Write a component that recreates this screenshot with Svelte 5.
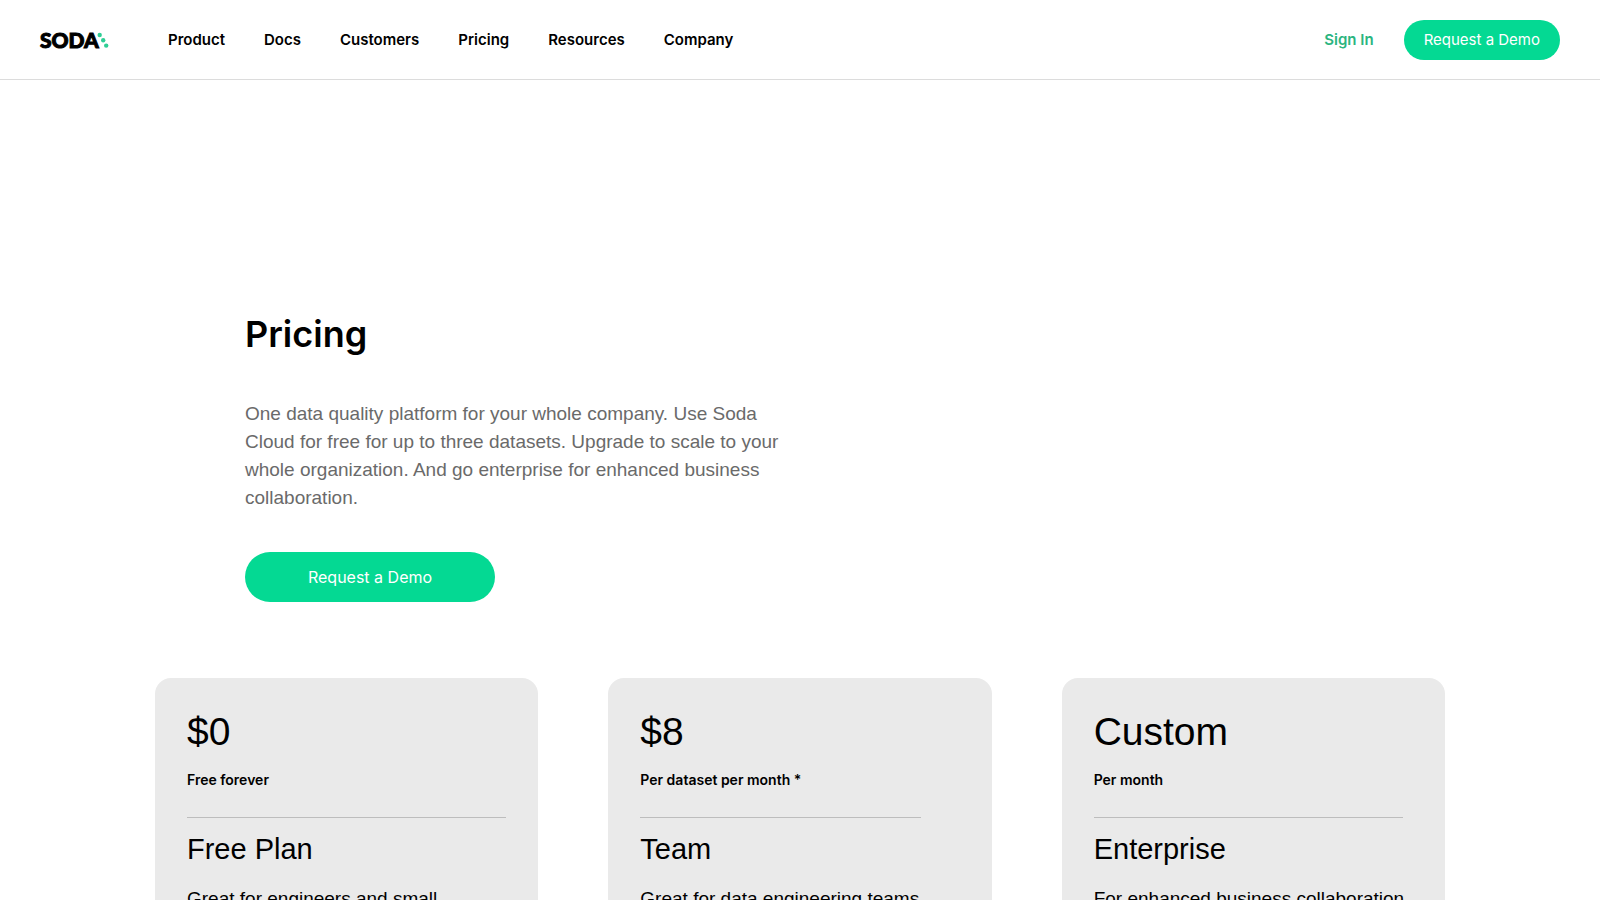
<script>
	const links = ['Product', 'Docs', 'Customers', 'Pricing', 'Resources', 'Company'];

	const plans = [
		{
			price: '$0',
			term: 'Free forever',
			name: 'Free Plan',
			text: 'Great for engineers and small',
			rule: 100
		},
		{
			price: '$8',
			term: 'Per dataset per month *',
			name: 'Team',
			text: 'Great for data engineering teams',
			rule: 88
		},
		{
			price: 'Custom',
			term: 'Per month',
			name: 'Enterprise',
			text: 'For enhanced business collaboration',
			rule: 97
		}
	];
</script>

<header class="topbar">
	<a class="logo" href="/" aria-label="Soda">
		<svg width="68" height="20" viewBox="0 0 68 20">
			<text class="wordmark" x="0" y="18">SODA</text>
			<circle class="dot" cx="59.7" cy="5" r="2.2" />
			<circle class="dot" cx="63.2" cy="10.3" r="2.2" />
			<circle class="dot" cx="66.2" cy="15.6" r="2.2" />
		</svg>
	</a>
	<nav class="menu">
		{#each links as link}
			<a href="/{link.toLowerCase()}">{link}</a>
		{/each}
	</nav>
	<div class="actions">
		<a class="sign-in" href="/sign-in">Sign In</a>
		<button class="demo">Request a Demo</button>
	</div>
</header>

<main>
	<section class="hero">
		<h1>Pricing</h1>
		<p>
			One data quality platform for your whole company. Use Soda Cloud for free for up to three
			datasets. Upgrade to scale to your whole organization. And go enterprise for enhanced business
			collaboration.
		</p>
		<button class="demo large">Request a Demo</button>
	</section>

	<section class="plans">
		{#each plans as plan}
			<article class="plan">
				<div class="price">{plan.price}</div>
				<div class="term">{plan.term}</div>
				<hr style="width: {plan.rule}%" />
				<h2>{plan.name}</h2>
				<p>{plan.text}</p>
			</article>
		{/each}
	</section>
</main>

<style>
	:global(body) {
		margin: 0;
		background: #fff;
		color: #000;
		font-family: 'Liberation Sans', Arial, sans-serif;
	}

	a {
		color: inherit;
		text-decoration: none;
	}

	.topbar {
		display: flex;
		align-items: center;
		height: 79px;
		padding: 0 40px;
		border-bottom: 1px solid #dcdcdc;
	}

	.logo {
		display: flex;
		margin-right: 60px;
	}

	.logo svg {
		overflow: visible;
	}

	.wordmark {
		font-family: Lato, sans-serif;
		font-size: 21px;
		font-weight: 900;
		stroke: #000;
		stroke-width: 1px;
	}

	.dot {
		fill: #2fce95;
	}

	.menu {
		display: flex;
		gap: 39px;
		font-family: Inter, sans-serif;
		font-size: 15px;
		font-weight: 600;
	}

	.actions {
		display: flex;
		align-items: center;
		gap: 30px;
		margin-left: auto;
	}

	.sign-in {
		color: #2bb580;
		font-family: Inter, sans-serif;
		font-size: 15px;
		font-weight: 600;
	}

	.demo {
		height: 40px;
		padding: 0 20px;
		border: none;
		border-radius: 25px;
		background: #04d993;
		color: #fff;
		font-family: Inter, sans-serif;
		font-size: 15px;
		cursor: pointer;
	}

	.demo.large {
		width: 250px;
		height: 50px;
		font-size: 16px;
	}

	.hero {
		max-width: 1110px;
		margin: 0 auto;
		padding: 230px 40px 76px;
	}

	h1 {
		margin: 0 0 42px;
		font-family: Inter, sans-serif;
		font-size: 36px;
		font-weight: 600;
		line-height: 48px;
	}

	.hero p {
		max-width: 540px;
		margin: 0 0 40px;
		color: #6a6a6a;
		font-size: 19px;
		line-height: 28px;
	}

	.plans {
		display: grid;
		grid-template-columns: repeat(3, 1fr);
		gap: 70px;
		max-width: 1290px;
		margin: 0 auto;
		padding: 0 40px 80px;
	}

	.plan {
		padding: 32px 32px 80px;
		border-radius: 16px;
		background: #eaeaea;
	}

	.price {
		font-size: 39px;
		line-height: 44px;
	}

	.term {
		margin-top: 16px;
		font-family: Inter, sans-serif;
		font-size: 14px;
		font-weight: 600;
		line-height: 20px;
	}

	hr {
		height: 1px;
		margin: 27px 0 11px;
		border: none;
		background: #bdbdbd;
	}

	h2 {
		margin: 0 0 16px;
		font-size: 29px;
		font-weight: 400;
		line-height: 40px;
	}

	.plan p {
		margin: 0;
		font-size: 19px;
		line-height: 28px;
	}
</style>
